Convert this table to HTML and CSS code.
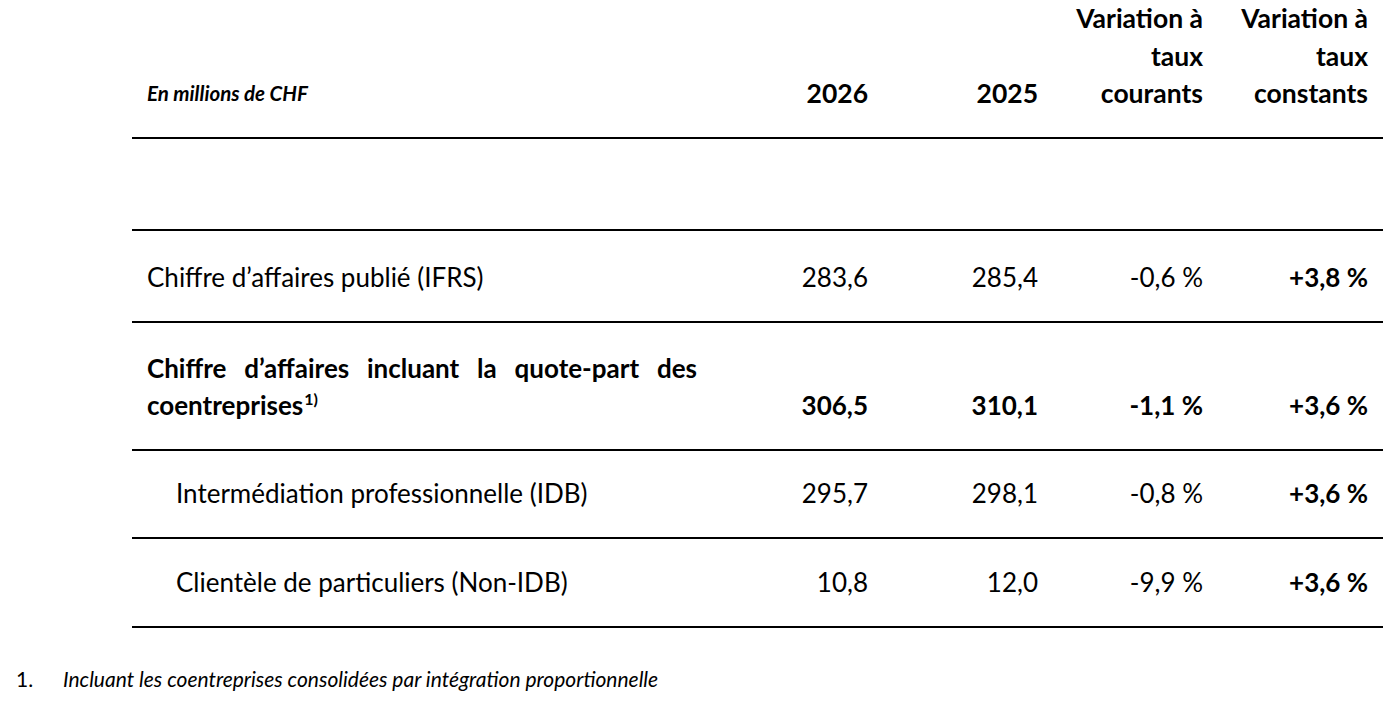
FILE: index.html
```html
<!DOCTYPE html>
<html lang="fr">
<head>
<meta charset="utf-8">
<title>Chiffre d'affaires</title>
<link rel="stylesheet" href="styles.css">
</head>
<body>
<table class="fin">
  <colgroup>
    <col class="c-label">
    <col class="c-2026">
    <col class="c-2025">
    <col class="c-var">
    <col class="c-var">
  </colgroup>
  <thead>
    <tr class="r-head">
      <th class="label"><span class="unit">En millions de CHF</span></th>
      <th>2026</th>
      <th>2025</th>
      <th>Variation à<br>taux<br>courants</th>
      <th>Variation à<br>taux<br>constants</th>
    </tr>
  </thead>
  <tbody>
    <tr class="r-empty">
      <td class="label"></td><td></td><td></td><td></td><td></td>
    </tr>
    <tr class="r-92">
      <td class="label">Chiffre d’affaires publié (IFRS)</td>
      <td>283,6</td>
      <td>285,4</td>
      <td>-0,6 %</td>
      <td class="b">+3,8 %</td>
    </tr>
    <tr class="r-128 bold">
      <td class="label just">Chiffre d’affaires incluant la quote-part des coentreprises<sup>1)</sup></td>
      <td>306,5</td>
      <td>310,1</td>
      <td>-1,1 %</td>
      <td>+3,6 %</td>
    </tr>
    <tr class="r-88">
      <td class="label sub">Intermédiation professionnelle (IDB)</td>
      <td>295,7</td>
      <td>298,1</td>
      <td>-0,8 %</td>
      <td class="b">+3,6 %</td>
    </tr>
    <tr class="r-89">
      <td class="label sub">Clientèle de particuliers (Non-IDB)</td>
      <td>10,8</td>
      <td>12,0</td>
      <td>-9,9 %</td>
      <td class="b">+3,6 %</td>
    </tr>
  </tbody>
</table>
<div class="notes">
  <span class="num">1.</span>
  <span class="note-text">Incluant les coentreprises consolidées par intégration proportionnelle</span>
</div>
</body>
</html>
```
FILE: styles.css
```css
html, body {
  margin: 0;
  padding: 0;
  background: #ffffff;
}
body {
  font-family: Lato, "Liberation Sans", sans-serif;
  color: #000000;
  width: 1385px;
  height: 703px;
  overflow: hidden;
}
.fin {
  margin-left: 132px;
  width: 1251px;
  border-collapse: separate;
  border-spacing: 0;
  table-layout: fixed;
  font-size: 26px;
  line-height: 37.5px;
}
.c-label { width: 580px; }
.c-2026 { width: 171px; }
.c-2025 { width: 170px; }
.c-var { width: 165px; }

.fin th,
.fin td {
  padding: 0 15px 24px 15px;
  vertical-align: bottom;
  text-align: right;
  border-bottom: 2px solid #000;
  white-space: nowrap;
}
.fin th {
  font-weight: 700;
  font-size: 26.5px;
}
.fin .label {
  text-align: left;
  white-space: normal;
}
.fin .just {
  text-align: justify;
}
.fin .sub {
  padding-left: 44px;
}
.unit {
  font-size: 20.5px;
  font-style: italic;
  font-weight: 700;
}
.r-head { height: 136px; }
.r-empty { height: 92px; }
.r-92 { height: 92px; }
.r-128 { height: 128px; }
.r-88 { height: 88px; }
.r-89 { height: 89px; }
.bold td { font-weight: 700; }
.b { font-weight: 700; }
sup {
  font-size: 16px;
  line-height: 0;
  vertical-align: 10px;
  margin-left: 1px;
}
.notes {
  display: flex;
  padding-left: 16px;
  margin-top: 39px;
  font-size: 21px;
  line-height: 24px;
}
.num {
  width: 47px;
}
.note-text {
  font-style: italic;
}
```
